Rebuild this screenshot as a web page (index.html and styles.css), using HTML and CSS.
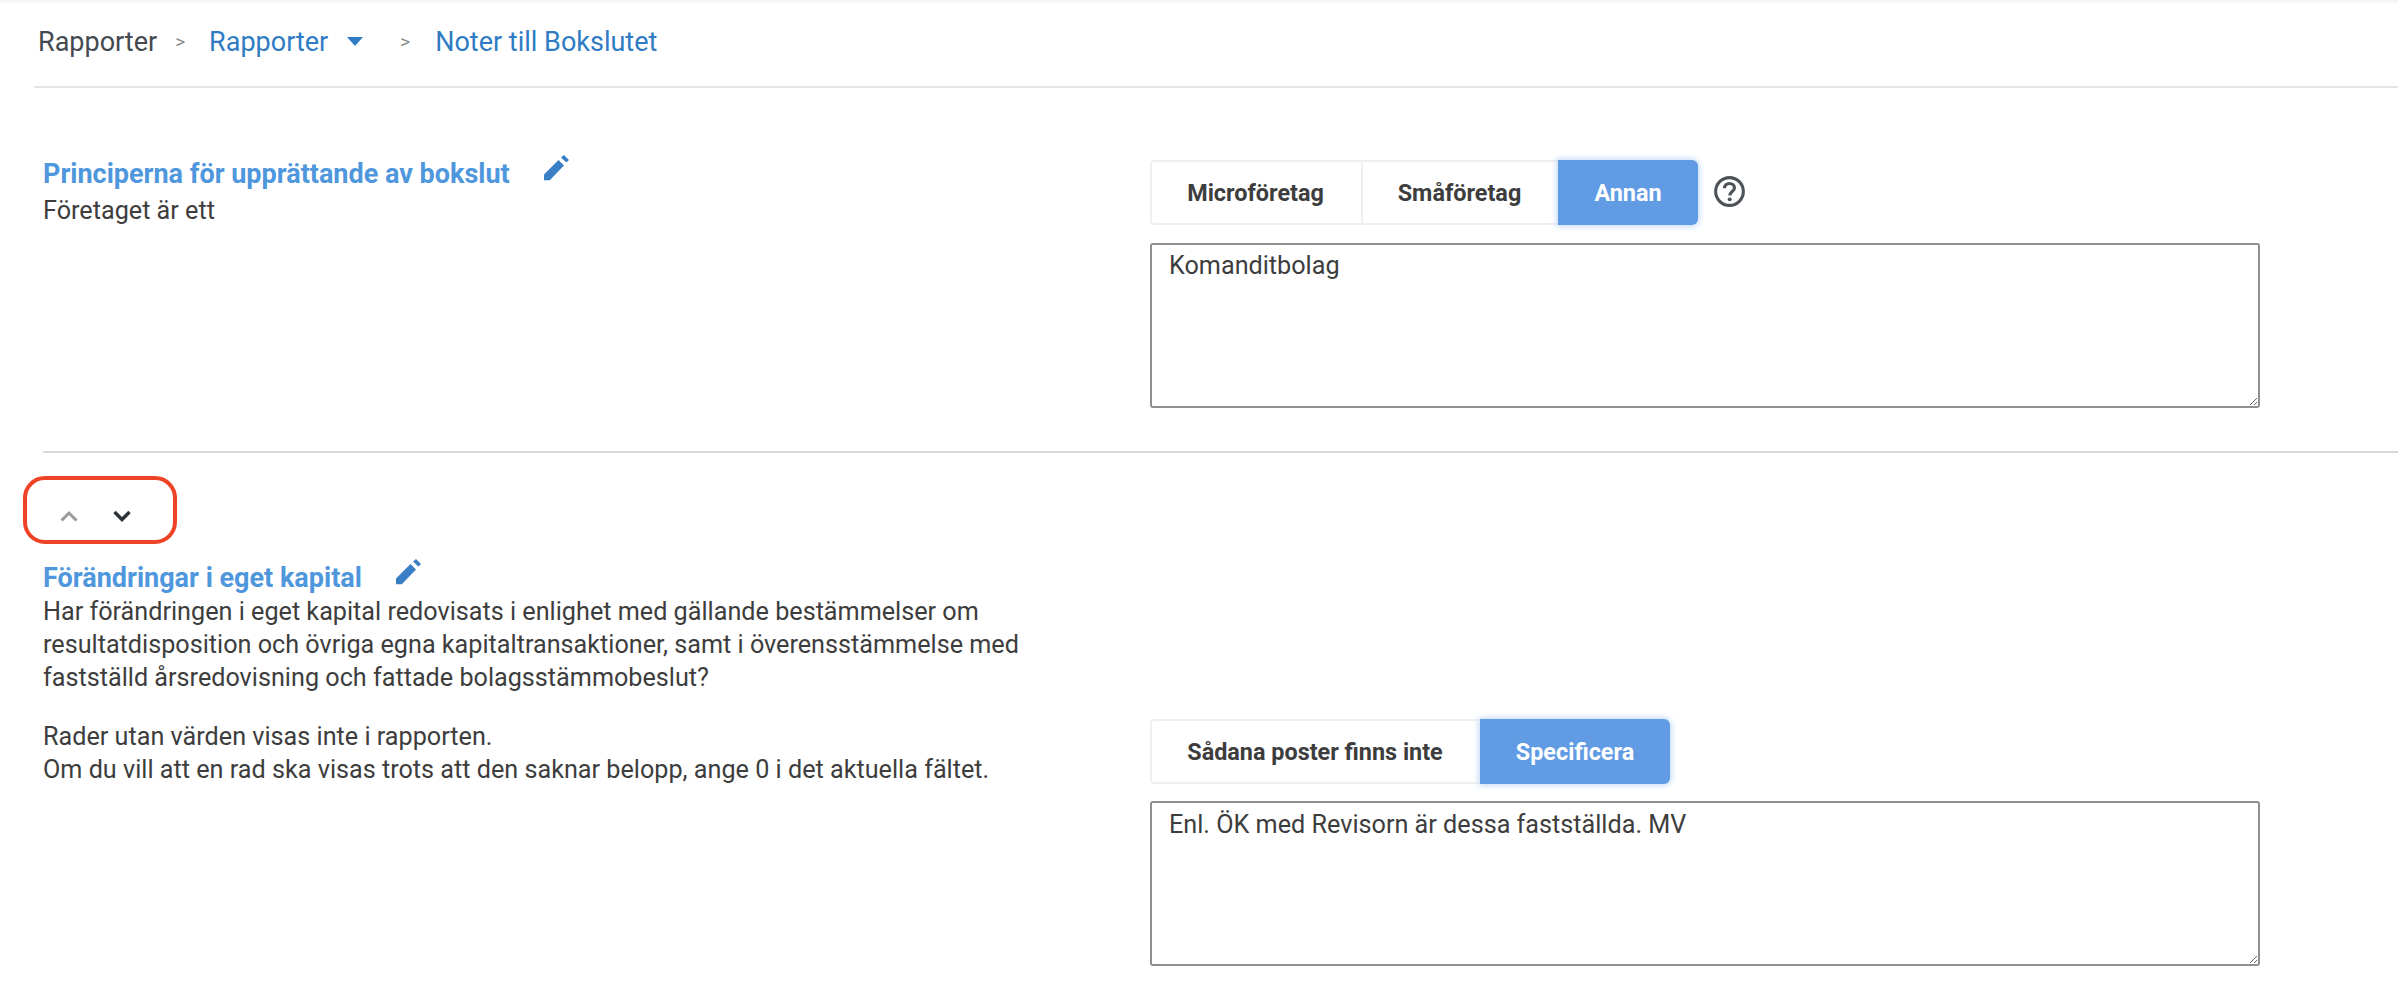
FILE: index.html
```html
<!DOCTYPE html>
<html lang="sv">
<head>
<meta charset="utf-8">
<title>Noter till Bokslutet</title>
<link rel="stylesheet" href="styles.css">
</head>
<body>
<nav class="crumbs">
  <span class="crumb-root">Rapporter</span>
  <span class="crumb-sep">&gt;</span>
  <a class="crumb-link">Rapporter</a>
  <svg class="caret" viewBox="0 0 16 9"><path d="M0 0h16L8 9z"/></svg>
  <span class="crumb-sep crumb-sep-wide">&gt;</span>
  <a class="crumb-link">Noter till Bokslutet</a>
</nav>
<main class="content">
  <section class="note note-first">
    <div class="note-text">
      <h2 class="note-title">Principerna för upprättande av bokslut
        <svg class="pencil" viewBox="0 0 25 26"><path d="M0 19.5L14.5 5l5.5 5.5L5.8 25.2H0zM17 2.5L20 0l5 5-2.7 2.6z"/></svg>
      </h2>
      <p class="note-body note-lead">Företaget är ett</p>
    </div>
    <div class="note-form form-first">
      <div class="toolbar">
        <div class="choices">
          <button class="choice choice-micro">Microföretag</button>
          <button class="choice choice-small">Småföretag</button>
          <button class="choice choice-active choice-other">Annan</button>
        </div>
        <svg class="help" viewBox="0 0 30 30"><circle cx="15" cy="15" r="13.4"/><path class="help-mark" d="M10.2 11.8c0-2.8 2.1-4.6 4.8-4.6s4.8 1.7 4.8 4.3c0 3.4-4.5 3.6-4.5 7.3"/><circle class="help-dot" cx="15.2" cy="22.6" r="1.9"/></svg>
      </div>
      <textarea class="answer" readonly>Komanditbolag</textarea>
    </div>
  </section>
  <section class="note note-second">
    <div class="note-text">
      <div class="movers">
        <svg class="mover mover-off" viewBox="0 0 20 14"><path d="M2.5 11.5L10 4l7.5 7.5"/></svg>
        <svg class="mover" viewBox="0 0 20 14"><path d="M2.5 3L10 10.5 17.5 3"/></svg>
      </div>
      <h2 class="note-title">Förändringar i eget kapital
        <svg class="pencil" viewBox="0 0 25 26"><path d="M0 19.5L14.5 5l5.5 5.5L5.8 25.2H0zM17 2.5L20 0l5 5-2.7 2.6z"/></svg>
      </h2>
      <p class="note-body">Har förändringen i eget kapital redovisats i enlighet med gällande bestämmelser om<br>resultatdisposition och övriga egna kapitaltransaktioner, samt i överensstämmelse med<br>fastställd årsredovisning och fattade bolagsstämmobeslut?</p>
      <p class="note-body note-hint">Rader utan värden visas inte i rapporten.<br>Om du vill att en rad ska visas trots att den saknar belopp, ange 0 i det aktuella fältet.</p>
    </div>
    <div class="note-form form-second">
      <div class="toolbar">
        <div class="choices">
          <button class="choice choice-none">Sådana poster finns inte</button>
          <button class="choice choice-active choice-spec">Specificera</button>
        </div>
      </div>
      <textarea class="answer" readonly>Enl. ÖK med Revisorn är dessa fastställda. MV</textarea>
    </div>
  </section>
</main>
</body>
</html>
```

FILE: styles.css
```css
*, *::after { box-sizing: border-box; }
html, body { height: 100%; }
body {
  margin: 0;
  background: #fff;
  color: #3d3d3d;
  font-family: Roboto, "Liberation Sans", sans-serif;
  font-size: 25.2px;
  overflow: hidden;
  box-shadow: inset 0 4px 3px -2px #f1f1f1;
}
.crumbs {
  display: flex;
  align-items: center;
  height: 88px;
  margin-left: 34px;
  padding: 0 0 3px 4px;
  border-bottom: 2px solid #e4e4e4;
  font-size: 27px;
  line-height: 32px;
}
.crumb-root { color: #444a50; }
.crumb-link { color: #2f7cc4; }
.crumb-sep { margin: 0 24px 0 18px; color: #8b8b8b; font-size: 19px; }
.crumb-sep-wide { margin: 0 25px 0 37px; }
.caret { width: 16px; height: 9px; margin-left: 19px; fill: #2f7cc4; }
.content { margin-left: 43px; }
.note {
  display: grid;
  grid-template-columns: 1107px 1110px;
  border-bottom: 2px solid #d8d8d8;
}
.note-first { height: 365px; }
.note-second { border-bottom: 0; }
.note-text { min-width: 0; }
.note-first .note-text { padding-top: 70px; }
.note-title {
  display: flex;
  align-items: center;
  margin: 0;
  color: #4f97dd;
  font-size: 27px;
  font-weight: 700;
  line-height: 33px;
}
.pencil { width: 25px; height: 26px; margin: -13px 0 0 34px; fill: #3a7fc6; }
.note-body { margin: 0; line-height: 33px; }
.note-lead { margin-top: 3px; }
.note-hint { margin-top: 26px; }
.form-first { padding-top: 72px; }
.form-second { padding-top: 266px; }
.form-second .answer { margin-top: 17px; padding-top: 5px; }
.toolbar { display: flex; align-items: center; gap: 16px; }
.choices { display: flex; }
.choice {
  height: 65px;
  padding: 0 2px 0 0;
  border: 2px solid #efefef;
  border-right-width: 0;
  background: #fff;
  color: #3d3d3d;
  font: 700 23.4px Roboto, "Liberation Sans", sans-serif;
}
.choice:first-child { border-radius: 4px 0 0 4px; }
.choice-active {
  padding: 0;
  border: 0;
  border-radius: 0 6px 6px 0;
  background: #619be4;
  color: #fff;
  box-shadow: 0 0 6px 1px #b9d5f6;
}
.choice-micro { width: 211px; }
.choice-small { width: 197px; }
.choice-other { width: 140px; }
.choice-none { width: 330px; }
.choice-spec { width: 190px; }
.help { width: 31px; height: 31px; margin-top: -2px; fill: none; stroke: #4c5257; stroke-width: 3; }
.help-dot { fill: #4c5257; stroke: none; }
.answer {
  display: block;
  width: 1110px;
  height: 165px;
  margin-top: 18px;
  padding: 4px 17px;
  border: 2px solid #8f8f8f;
  border-radius: 3px;
  outline: 0;
  color: #3d3d3d;
  font: 400 25.2px/33px Roboto, "Liberation Sans", sans-serif;
  resize: both;
}
.movers {
  display: flex;
  gap: 33px;
  align-items: center;
  height: 109px;
  padding: 17px 0 0 16px;
}
.mover { width: 20px; height: 14px; fill: none; stroke: #2b3238; stroke-width: 3.4; }
.mover-off { stroke: #9b9b9b; stroke-width: 3; }
.movers::after {
  content: "";
  position: absolute;
  left: 23px;
  top: 476px;
  width: 154px;
  height: 68px;
  border: 4px solid #ee4327;
  border-radius: 22px;
}
```
